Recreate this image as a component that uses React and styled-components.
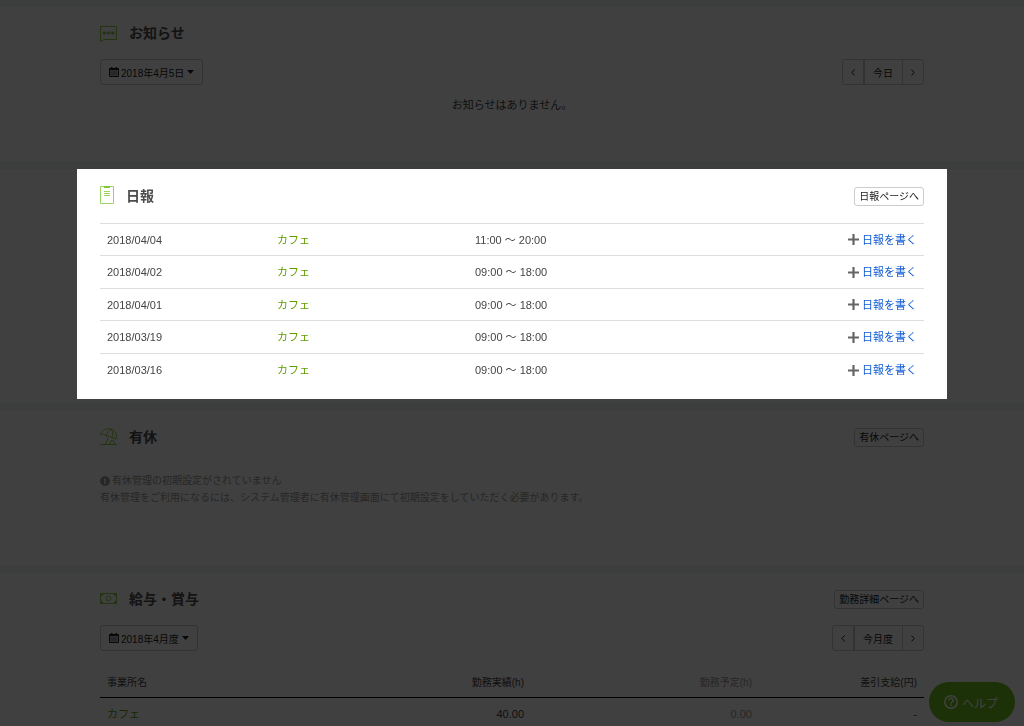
import React from "react";
import styled, { createGlobalStyle } from "styled-components";
import { FaExclamationCircle } from "react-icons/fa";

const reports = [
    { date: "2018/04/04", place: "カフェ", time: "11:00 ～ 20:00" },
    { date: "2018/04/02", place: "カフェ", time: "09:00 ～ 18:00" },
    { date: "2018/04/01", place: "カフェ", time: "09:00 ～ 18:00" },
    { date: "2018/03/19", place: "カフェ", time: "09:00 ～ 18:00" },
    { date: "2018/03/16", place: "カフェ", time: "09:00 ～ 18:00" },
];

const CalendarIcon = () => (
    <svg width="10" height="10" viewBox="0 0 10 10" fill="currentColor" aria-hidden="true">
        <path d="M2 0h1.500v1h3V0H8v1h1.200q.8 0 .8.8v7.400q0 .8-.8.8H.8q-.8 0-.8-.8V1.800Q0 1 .8 1H2z" />
        <path d="M1 3h8v6H1z" fill="#fff" opacity=".85" />
        <path d="M1 5h8M1 7h8M3 3v6M5 3v6M7 3v6" stroke="currentColor" strokeWidth=".4" />
    </svg>
);

const CaretIcon = () => (
    <svg width="8" height="4" viewBox="0 0 8 4" fill="currentColor" aria-hidden="true">
        <path d="M1 0h7L4.500 4z" />
    </svg>
);

const AngleIcon = ({ right }) => (
    <svg width="4" height="8" viewBox="0 0 4 8" fill="none" stroke="currentColor" aria-hidden="true">
        <path d={right ? "M.5 1.500L3.200 4.500L.5 7.500" : "M3.500 1.500L.8 4.500L3.500 7.500"} />
    </svg>
);

const PlusIcon = () => (
    <svg width="11" height="11" viewBox="0 0 11 11" fill="#666" aria-hidden="true">
        <path d="M4.400 0h2.200v4.400H11v2.200H6.600V11H4.400V6.600H0V4.400h4.400z" />
    </svg>
);

const NewsIcon = () => (
    <svg width="17" height="18" viewBox="0 -2 17 18" fill="none" stroke="#8fcf4a" aria-hidden="true">
        <path d="M.5 .5h16v13H4L.5 15.500z" />
        <g fill="#8fcf4a" stroke="none">
            <circle cx="4.300" cy="7" r="1.800" />
            <circle cx="8.500" cy="7" r="1.800" />
            <circle cx="12.700" cy="7" r="1.800" />
        </g>
    </svg>
);

const ReportIcon = () => (
    <svg width="14" height="20" viewBox="0 0 14 20" fill="none" stroke="#9ad465" aria-hidden="true">
        <path d="M.5 .5h13v17H.5z" />
        <path d="M4 0h6v2H4z" fill="#7fc832" stroke="none" />
        <path d="M4 5.500h6M4 7.500h6M4 9.500h6" />
    </svg>
);

const ParasolIcon = () => (
    <svg width="17" height="18" viewBox="0 0 17 18" fill="none" stroke="#8fcf4a" aria-hidden="true">
        <path d="M.6 6.200C2.300 1.900 7-.4 11.200 1.100C15.300 2.600 17.300 6.700 16 11.400C14.600 10.300 13.200 10.100 11.800 10C10.500 8.500 8.500 7.700 6.200 7.900C4.600 6.500 2.800 5.900 .6 6.200z" />
        <path d="M11.200 1.100C8.500 2 7 4.500 6.200 7.900M11.200 1.100C13 3.500 13 6.800 11.800 10M8.800 8.600L5.500 16" />
        <path d="M0 16.500h17M10.300 16v-1.500a2 2 0 0 1 4 0V16" />
    </svg>
);

const MoneyIcon = () => (
    <svg width="17" height="12" viewBox="0 0 17 12" fill="none" stroke="#8fcf4a" aria-hidden="true">
        <path d="M.5 .5h16v10H.5z" />
        <path d="M0 0h3.500A3.500 3.500 0 0 1 0 3.500zM17 0v3.500A3.500 3.500 0 0 1 13.500 0zM0 11V7.500A3.500 3.500 0 0 1 3.500 11zM17 11h-3.500A3.500 3.500 0 0 1 17 7.500z" fill="#8fcf4a" stroke="none" />
        <ellipse cx="8.500" cy="5.500" rx="2.200" ry="2.500" />
    </svg>
);

const HelpIcon = () => (
    <svg width="14" height="14" viewBox="0 0 14 14" fill="none" stroke="currentColor" strokeWidth="1.500" aria-hidden="true">
        <circle cx="7" cy="7" r="6.200" />
        <path d="M4.900 5.500a2.100 2.100 0 1 1 3.200 1.700c-.8 .5-1.100 .8-1.100 1.500" />
        <path d="M7 9.600v1.500" />
    </svg>
);

const Heading = ({ icon, title, link }) => (
    <HeadingRow>
        {icon}
        <Title>{title}</Title>
        {link && <PageLink href="#">{link}</PageLink>}
    </HeadingRow>
);

const Pager = ({ date, current }) => (
    <PagerRow>
        <DateButton type="button">
            <CalendarIcon />
            {date}
            <CaretIcon />
        </DateButton>
        <ButtonGroup>
            <StepButton type="button" aria-label="前へ"><AngleIcon /></StepButton>
            <CurrentButton type="button">{current}</CurrentButton>
            <NextButton type="button" aria-label="次へ"><AngleIcon right /></NextButton>
        </ButtonGroup>
    </PagerRow>
);

const App = () => {
    return (
        <Page>
            <GlobalStyle />
            <Section>
                <Inner>
                    <Heading icon={<NewsIcon />} title="お知らせ" />
                    <Pager date="2018年4月5日" current="今日" />
                    <Empty>お知らせはありません。</Empty>
                </Inner>
            </Section>

            <SpotlightSection>
                <Spotlight>
                    <Heading icon={<ReportIcon />} title="日報" link="日報ページへ" />
                    <ReportTable>
                        <colgroup>
                            <Col $width="170px" />
                            <Col $width="198px" />
                            <Col />
                            <Col />
                        </colgroup>
                        <tbody>
                            {reports.map((report) => (
                                <tr key={report.date}>
                                    <td>{report.date}</td>
                                    <td><PlaceLink href="#">{report.place}</PlaceLink></td>
                                    <td>{report.time}</td>
                                    <td>
                                        <WriteLink href="#">
                                            <PlusIcon />
                                            日報を書く
                                        </WriteLink>
                                    </td>
                                </tr>
                            ))}
                        </tbody>
                    </ReportTable>
                </Spotlight>
            </SpotlightSection>

            <Section>
                <Inner>
                    <Heading icon={<ParasolIcon />} title="有休" link="有休ページへ" />
                    <Notice>
                        <NoticeTitle>
                            <FaExclamationCircle />
                            有休管理の初期設定がされていません
                        </NoticeTitle>
                        有休管理をご利用になるには、システム管理者に有休管理画面にて初期設定をしていただく必要があります。
                    </Notice>
                </Inner>
            </Section>

            <Section>
                <Inner>
                    <Heading icon={<MoneyIcon />} title="給与・賞与" link="勤務詳細ページへ" />
                    <Pager date="2018年4月度" current="今月度" />
                    <PayTable>
                        <colgroup>
                            <Col />
                            <Col $width="228px" />
                            <Col $width="228px" />
                            <Col $width="165px" />
                        </colgroup>
                        <thead>
                            <tr>
                                <th>事業所名</th>
                                <th>勤務実績(h)</th>
                                <MutedHead>勤務予定(h)</MutedHead>
                                <th>差引支給(円)</th>
                            </tr>
                        </thead>
                        <tbody>
                            <tr>
                                <td><PlaceLink href="#">カフェ</PlaceLink></td>
                                <td>40.00</td>
                                <MutedCell>0.00</MutedCell>
                                <td>-</td>
                            </tr>
                        </tbody>
                    </PayTable>
                </Inner>
            </Section>

            <HelpButton type="button">
                <HelpIcon />
                ヘルプ
            </HelpButton>
        </Page>
    )
}

const GlobalStyle = createGlobalStyle`
    *, *::before, *::after {
        box-sizing: border-box;
    }

    body {
        margin: 0;
        color: #444;
        font-family: "Liberation Sans", "Noto Sans CJK JP", sans-serif;
        font-size: 11px;
        line-height: 16px;
    }

    button {
        font-family: inherit;
        cursor: pointer;
    }

    a {
        text-decoration: none;
    }

    svg {
        flex-shrink: 0;
    }
`;

const Page = styled.main`
    height: 100vh;
    overflow: hidden;
    padding-top: 7px;
    background: #f0f6f5;
    display: flex;
    flex-direction: column;
    gap: 8px;
`;

const Section = styled.section`
    flex-shrink: 0;
    min-height: 154px;
    padding-top: 16px;
    background: #fff;
`;

const SpotlightSection = styled(Section)`
    padding: 0 0 4px;
`;

const Inner = styled.div`
    max-width: 870px;
    margin: 0 auto;
    padding: 0 23px;
`;

// The shadow dims everything around the highlighted block
const Spotlight = styled(Inner)`
    position: relative;
    z-index: 2;
    padding-top: 17px;
    padding-bottom: 13px;
    background: #fff;
    box-shadow: 0 0 0 200vmax rgba(0, 0, 0, 0.75);
`;

const HeadingRow = styled.header`
    display: flex;
    align-items: center;
    gap: 12px;
    height: 20px;
`;

const Title = styled.h2`
    flex: 1;
    margin: 0;
    color: #4c4c4c;
    font-size: 14px;
    line-height: 20px;
    font-weight: bold;
`;

const PageLink = styled.a`
    padding: 0 4px;
    border: 1px solid #ccc;
    border-radius: 3px;
    color: #222;
    font-size: 10px;
    line-height: 17px;
`;

const PagerRow = styled.div`
    display: flex;
    justify-content: space-between;
    margin-top: 16px;
`;

const Button = styled.button`
    display: flex;
    align-items: center;
    justify-content: center;
    height: 26px;
    padding: 0 8px;
    border: 1px solid #ccc;
    border-radius: 3px;
    background: #fff;
    color: #222;
    font-size: 10px;
`;

const DateButton = styled(Button)`
    gap: 2px;
`;

const ButtonGroup = styled.div`
    display: flex;
`;

const StepButton = styled(Button)`
    width: 22px;
    padding: 0;
    border-radius: 3px 0 0 3px;
`;

const CurrentButton = styled(Button)`
    padding: 0 9px 0 8px;
    border-radius: 0;
`;

const NextButton = styled(StepButton)`
    margin-left: -1px;
    border-radius: 0 3px 3px 0;
`;

const Empty = styled.p`
    margin: 12px 0 0;
    text-align: center;
`;

const Table = styled.table`
    width: 100%;
    table-layout: fixed;
    border-collapse: separate;
    border-spacing: 0;

    th, td {
        padding: 0 7px;
    }
`;

const Col = styled.col`
    width: ${(props) => props.$width || "auto"};
`;

const ReportTable = styled(Table)`
    margin-top: 17px;

    td {
        height: 33px;
        border-top: 1px solid #ddd;
    }

    tr:nth-child(odd) td {
        height: 32px;
    }

    tr:last-child td {
        height: 33px;
    }

    td:last-child {
        text-align: right;
    }
`;

const PlaceLink = styled.a`
    color: #5f9c00;
`;

const WriteLink = styled.a`
    display: inline-flex;
    align-items: center;
    gap: 3px;
    color: #0f5bd3;
    vertical-align: bottom;
`;

const Notice = styled.div`
    margin-top: 25px;
    color: #999;
    font-size: 10px;
    line-height: 17px;
`;

const NoticeTitle = styled.div`
    display: flex;
    align-items: center;
    gap: 2px;
`;

const PayTable = styled(Table)`
    margin-top: 16px;

    th {
        height: 31px;
        padding-top: 2px;
        border-bottom: 1px solid #000;
        font-size: 10px;
        font-weight: normal;
    }

    td {
        height: 32px;
    }

    th, td {
        text-align: right;
    }

    th:first-child, td:first-child {
        text-align: left;
    }
`;

const MutedHead = styled.th`
    color: #999;
`;

const MutedCell = styled.td`
    color: #999;
`;

const HelpButton = styled.button`
    position: fixed;
    right: 9px;
    bottom: 4px;
    z-index: 1;
    display: flex;
    align-items: center;
    gap: 4px;
    height: 40px;
    padding: 0 17px 0 15px;
    border: 0;
    border-radius: 20px;
    background: #70c41c;
    color: #fff;
    font-size: 12px;
`;

export default App;
